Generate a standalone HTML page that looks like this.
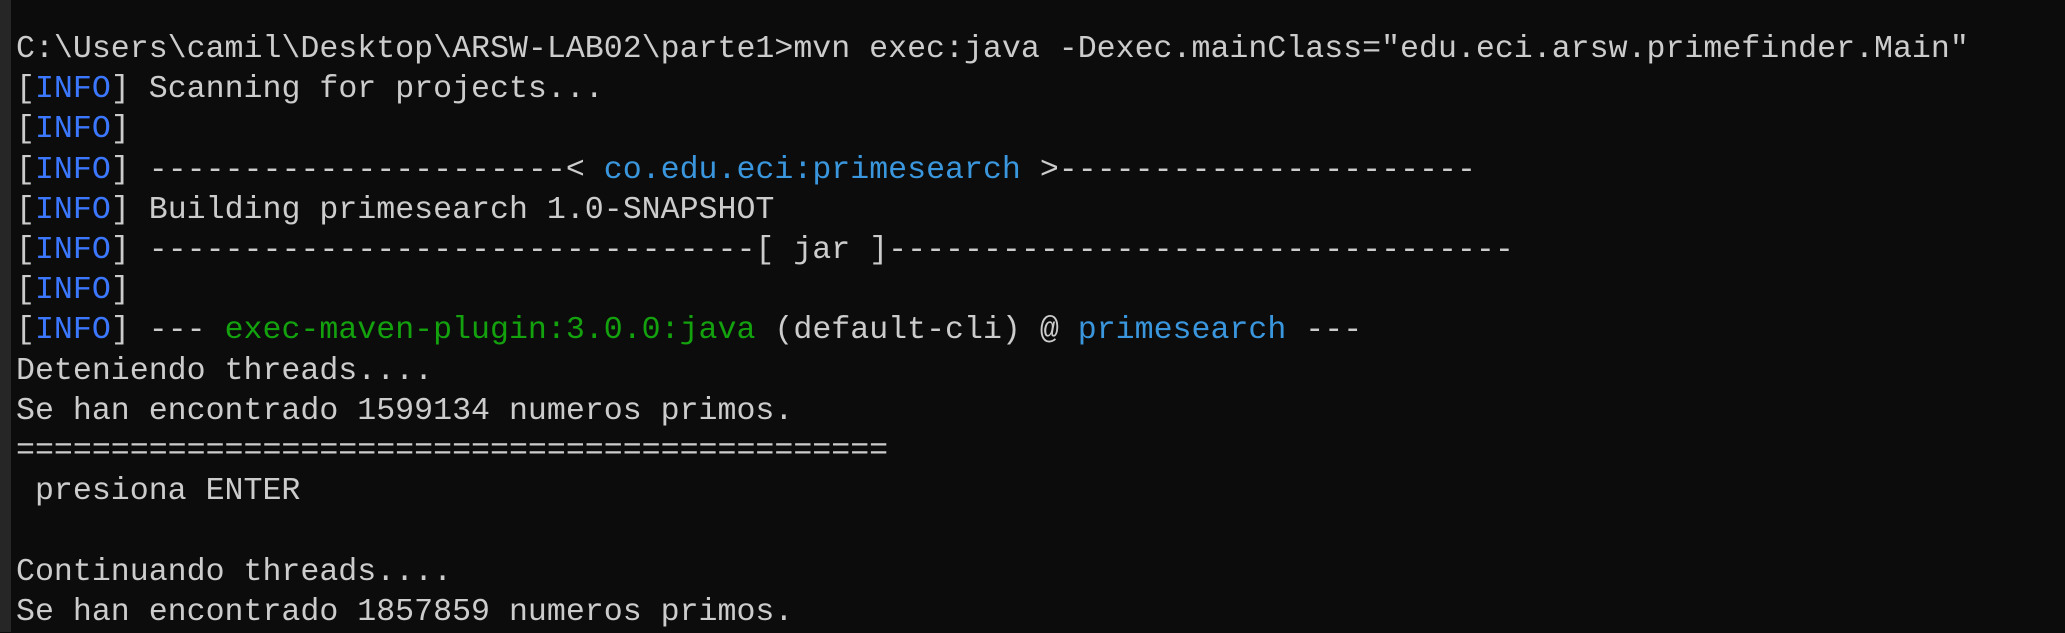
<!DOCTYPE html>
<html><head><meta charset="utf-8"><style>
html,body{margin:0;padding:0;background:#0c0c0c;width:2065px;height:632px;overflow:hidden}
.strip{position:absolute;left:0;top:0;width:11px;height:632px;background:#262626}
pre{position:absolute;left:16px;top:30px;margin:0;font-family:"Liberation Mono",monospace;font-size:31.6px;line-height:40.2px;color:#cccccc;white-space:pre}
.b{color:#3b78ff}.c{color:#3a96dd}.g{color:#13a10e}
</style></head><body><div class="strip"></div>
<pre>C:\Users\camil\Desktop\ARSW-LAB02\parte1&gt;mvn exec:java -Dexec.mainClass="edu.eci.arsw.primefinder.Main"
[<span class="b">INFO</span>] Scanning for projects...
[<span class="b">INFO</span>]
[<span class="b">INFO</span>] ----------------------&lt; <span class="c">co.edu.eci:primesearch</span> &gt;----------------------
[<span class="b">INFO</span>] Building primesearch 1.0-SNAPSHOT
[<span class="b">INFO</span>] --------------------------------[ jar ]---------------------------------
[<span class="b">INFO</span>]
[<span class="b">INFO</span>] --- <span class="g">exec-maven-plugin:3.0.0:java</span> (default-cli) @ <span class="c">primesearch</span> ---
Deteniendo threads....
Se han encontrado 1599134 numeros primos.
==============================================
 presiona ENTER

Continuando threads....
Se han encontrado 1857859 numeros primos.</pre>
</body></html>
